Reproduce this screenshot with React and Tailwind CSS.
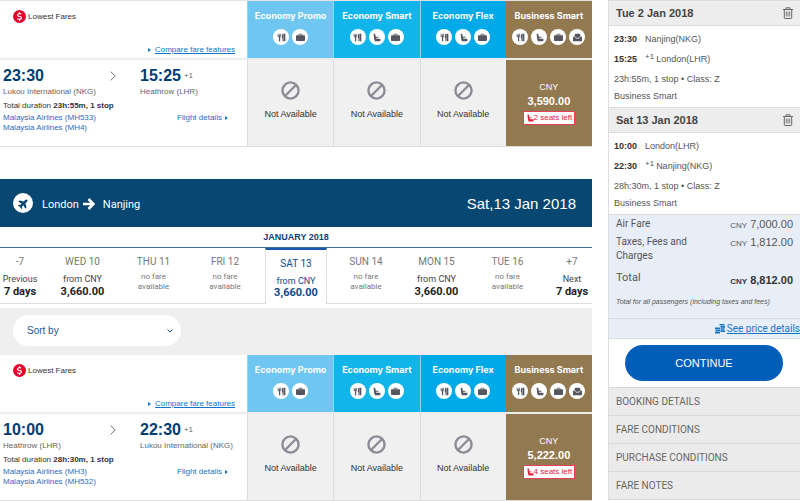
import { FaDollarSign, FaPlane } from 'react-icons/fa6';

const fares = [
  { name: 'Economy Promo', head: 'bg-[#6ec6f1]', perks: ['meal', 'bag'] },
  { name: 'Economy Smart', head: 'bg-[#12b5ea]', perks: ['meal', 'seat', 'bag'] },
  { name: 'Economy Flex', head: 'bg-[#00a9e7]', perks: ['meal', 'seat', 'bag'] },
  { name: 'Business Smart', head: 'bg-[#937950]', perks: ['meal', 'seat', 'bag', 'lounge'] },
];

const outbound = {
  depart: '23:30',
  from: 'Lukou International (NKG)',
  arrive: '15:25',
  to: 'Heathrow (LHR)',
  duration: '23h:55m, 1 stop',
  airlines: ['Malaysia Airlines (MH533)', 'Malaysia Airlines (MH4)'],
  price: '3,590.00',
  seats: '2 seats left',
};

const inbound = {
  depart: '10:00',
  from: 'Heathrow (LHR)',
  arrive: '22:30',
  to: 'Lukou International (NKG)',
  duration: '28h:30m, 1 stop',
  airlines: ['Malaysia Airlines (MH3)', 'Malaysia Airlines (MH532)'],
  price: '5,222.00',
  seats: '4 seats left',
};

const days = [
  { label: '-7', line: 'Previous', value: '7 days', pad: 'pr-[7px]' },
  { label: 'WED 10', line: 'from CNY', value: '3,660.00' },
  { label: 'THU 11' },
  { label: 'FRI 12', pad: 'pr-1' },
  { label: 'SAT 13', line: 'from CNY', value: '3,660.00', active: true },
  { label: 'SUN 14', pad: 'pl-1' },
  { label: 'MON 15', line: 'from CNY', value: '3,660.00' },
  { label: 'TUE 16' },
  { label: '+7', line: 'Next', value: '7 days', pad: 'pl-[9px]' },
];

const trips = [
  { date: 'Tue 2 Jan 2018', depart: '23:30', from: 'Nanjing(NKG)', arrive: '15:25', to: 'London(LHR)', info: '23h:55m, 1 stop • Class: Z' },
  { date: 'Sat 13 Jan 2018', depart: '10:00', from: 'London(LHR)', arrive: '22:30', to: 'Nanjing(NKG)', info: '28h:30m, 1 stop • Class: Z' },
];

const sections = ['BOOKING DETAILS', 'FARE CONDITIONS', 'PURCHASE CONDITIONS', 'FARE NOTES'];

const SEAT_PATH = 'M2.500 1h2.300l1.200 5h4v1.500H6.400L6.700 9H13v4H4.500L3.300 9z';

function PerkIcon({ type }) {
  return (
    <span className="flex size-4 items-center justify-center rounded-full bg-white text-[#55565f]">
      <svg viewBox="0 0 14 14" className="size-[9px]" fill="currentColor" aria-hidden="true">
        {type === 'meal' && (
          <path d="M1 1h1v3h1V1h1v3h1V1h1v4L5 6.500V13H3V6.500L1 5zM7.500 3.500C7.500 2 8.500 1 10 1v12H8.500V8h-1zM10.500 1H13v12h-2.500z" />
        )}
        {type === 'seat' && <path d={SEAT_PATH} />}
        {type === 'bag' && (
          <path d="M4 3.500V2.200C4 1.500 4.500 1 5.200 1h3.600c.7 0 1.200.5 1.200 1.200v1.300h2.500c.8 0 1.500.7 1.500 1.500v6c0 .8-.7 1.500-1.500 1.500h-11C.7 12.500 0 11.800 0 11V5c0-.8.7-1.500 1.500-1.500zM5.200 3.500h3.600V2.200H5.200z" />
        )}
        {type === 'lounge' && (
          <path d="M2.500 5V3.500C2.500 2 3.500 1 5 1h4c1.500 0 2.500 1 2.500 2.500V5L9 7.500H5zM0 7c0-1 .7-1.600 1.500-1.600.6 0 1 .3 1.400.8L5 8.500h4l2.100-2.300c.4-.5.8-.8 1.400-.8C13.300 5.400 14 6 14 7v5c0 .6-.4 1-1 1H1c-.6 0-1-.4-1-1z" />
        )}
      </svg>
    </span>
  );
}

function TrashIcon() {
  return (
    <svg viewBox="0 0 10 12" className="h-3 w-[10px]" fill="none" stroke="#666" aria-hidden="true">
      <path d="M0 2.500h10M3 2.500V.8h4v1.700M1.300 2.500v8.200c0 .5.3.8.8.8h5.800c.5 0 .8-.3.8-.8V2.500" />
      <path d="M3.300 4.500v5M5 4.500v5M6.700 4.500v5" strokeWidth=".8" />
    </svg>
  );
}

function FareTable({ flight }) {
  return (
    <table className="w-full table-fixed border-separate border-spacing-0 border-b border-[#ddd] bg-white">
      <thead>
        <tr>
          <th className="w-[247px] p-0 font-normal">
            <div className="flex h-[57px] flex-col justify-between pt-[9px] pr-3 pb-0.5 pl-[13px]">
              <p className="flex items-center gap-0.5 text-[8px] text-[#333]">
                <span className="flex size-[13px] items-center justify-center rounded-full bg-[#e4002b]">
                  <FaDollarSign className="size-[9px] text-white" />
                </span>
                Lowest Fares
              </p>
              <a href="#compare" className="flex items-center justify-end gap-1 text-[8px] leading-3 text-[#1573c6]">
                <svg viewBox="0 0 3 4" className="h-1 w-[3px]" fill="currentColor" aria-hidden="true"><path d="M0 0l3 2-3 2z" /></svg>
                <span className="underline">Compare fare features</span>
              </a>
            </div>
          </th>
          {fares.map(f => (
            <th key={f.name} className={`border-l border-[#8fd4f4] p-0 align-top last:border-l-0 ${f.head}`}>
              <div className="flex flex-col items-center gap-[7px] pt-2">
                <span className="font-[Inter,sans-serif] text-[9px] leading-[13px] font-bold whitespace-nowrap text-white">{f.name}</span>
                <div className="flex gap-[3px]">
                  {f.perks.map(p => <PerkIcon key={p} type={p} />)}
                </div>
              </div>
            </th>
          ))}
        </tr>
      </thead>
      <tbody>
        <tr>
          <td className="border-t-2 border-[#ececec] p-0 align-top">
            <div className="flex h-[86px] pt-[6px] pl-[3px] text-[8px] leading-3 text-[#666]">
              <div className="w-[137px] whitespace-nowrap">
                <div className="flex items-center">
                  <span className="w-[107px] text-[16px] leading-5 font-bold text-[#003d75]">{flight.depart}</span>
                  <svg viewBox="0 0 6 10" className="h-[10px] w-[6px]" fill="none" stroke="#777" aria-hidden="true"><path d="M.6.6L5.200 5 .6 9.400" /></svg>
                </div>
                <p>{flight.from}</p>
                <p className="leading-[15px] text-[#333]">Total duration <b>{flight.duration}</b></p>
                {flight.airlines.map(a => (
                  <a key={a} href="#airline" className="block leading-[10px] text-[#2d6cc0]">{a}</a>
                ))}
              </div>
              <div className="whitespace-nowrap">
                <div className="flex items-center gap-[3px]">
                  <span className="text-[16px] leading-5 font-bold text-[#003d75]">{flight.arrive}</span>
                  <span>+1</span>
                </div>
                <p>{flight.to}</p>
                <a href="#details" className="mt-[14px] ml-[37px] flex items-center gap-[3px] text-[#1573c6]">
                  Flight details
                  <svg viewBox="0 0 3 4" className="h-1 w-[3px]" fill="currentColor" aria-hidden="true"><path d="M0 0l3 2-3 2z" /></svg>
                </a>
              </div>
            </div>
          </td>
          {fares.slice(0, 3).map(f => (
            <td key={f.name} className="border-t-2 border-l border-[#dcdcdc] border-t-[#ececec] bg-[#f0f0f0] p-0 align-top">
              <div className="flex flex-col items-center gap-2 pt-[21px] text-[9px] leading-3 text-[#333]">
                <svg viewBox="0 0 20 20" className="size-[19px]" fill="none" stroke="#8c8c96" strokeWidth="2.500" aria-hidden="true">
                  <circle cx="10" cy="10" r="8.500" />
                  <path d="M4.500 15.500l11-11" />
                </svg>
                Not Available
              </div>
            </td>
          ))}
          <td className="border-t-2 border-t-[#ececec] bg-[#937950] p-0 align-top">
            <div className="flex flex-col items-center pt-5 text-[9px] leading-[14px] text-white">
              CNY
              <b className="text-[11px]">{flight.price}</b>
              <span className="mt-[3px] flex items-center border border-[#e4405a] bg-white px-0.5 text-[8px] leading-3 whitespace-nowrap text-[#e0203c]">
                <svg viewBox="0 0 14 14" className="size-2" fill="currentColor" aria-hidden="true"><path d={SEAT_PATH} /></svg>
                {flight.seats}
              </span>
            </div>
          </td>
        </tr>
      </tbody>
    </table>
  );
}

function DayCell({ day }) {
  if (day.active) {
    return (
      <button type="button" aria-pressed="true" className="flex h-14 flex-col items-center border-x border-t-2 border-x-[#ddd] border-t-[#1c57b0] pt-2 text-[#0b4a8a]">
        <span className="text-[10px] leading-3">{day.label}</span>
        <span className="mt-[5px] text-[9px] leading-3">{day.line}</span>
        <b className="text-[11px] leading-3">{day.value}</b>
      </button>
    );
  }
  return (
    <button type="button" className={`flex h-14 flex-col items-center border-b border-[#ddd] pt-2 text-[#777] ${day.pad || ''}`}>
      <span className="text-[10px] leading-3">{day.label}</span>
      {day.value ? (
        <>
          <span className="mt-[5px] text-[9px] leading-3 text-[#444]">{day.line}</span>
          <b className="text-[11px] leading-[13px] whitespace-nowrap text-[#222]">{day.value}</b>
        </>
      ) : (
        <span className="mt-1 text-[8px] leading-[10px]">no fare<br />available</span>
      )}
    </button>
  );
}

function Summary() {
  return (
    <aside className="w-[192px] shrink-0 border-l border-[#ddd] text-[9px] text-[#555]">
      {trips.map(t => (
        <section key={t.date}>
          <div className="flex h-[26px] items-center justify-between border-y border-[#ddd] bg-[#ededed] px-[7px]">
            <h2 className="text-[11px] font-bold text-[#444]">{t.date}</h2>
            <button type="button" aria-label={`Remove ${t.date}`}><TrashIcon /></button>
          </div>
          <div className="py-[3px] pl-[5px] leading-5">
            <p className="flex"><b className="w-[31px] text-[#333]">{t.depart}</b>{t.from}</p>
            <p className="flex"><b className="w-[31px] text-[#333]">{t.arrive}</b><span className="mr-0.5 text-[8px] leading-4">+1</span>{t.to}</p>
            <p>{t.info}</p>
            <p className="leading-[15px]">Business Smart</p>
          </div>
        </section>
      ))}
      <div className="border-y border-[#ddd] bg-[#e8eef7]">
        <dl className="grid grid-cols-[1fr_auto] px-[7px] font-[Roboto,sans-serif] text-[10px]">
          <dt className="leading-[18px]">Air Fare</dt>
          <dd className="font-['Liberation_Sans',Arial,sans-serif] text-[11px] leading-[18px]"><span className="text-[8px]">CNY</span> 7,000.00</dd>
          <dt className="w-[80px] leading-[14px]">Taxes, Fees and Charges</dt>
          <dd className="font-['Liberation_Sans',Arial,sans-serif] text-[11px] leading-[14px]"><span className="text-[8px]">CNY</span> 1,812.00</dd>
          <dt className="mt-[6px] text-[11px] leading-[17px]">Total</dt>
          <dd className="mt-[7px] font-['Liberation_Sans',Arial,sans-serif] text-[11px] leading-5 font-bold text-[#333]"><span className="text-[8px]">CNY</span> 8,812.00</dd>
        </dl>
        <p className="mt-1 mb-[10px] pl-[7px] text-[7px] leading-3 italic">Total for all passengers (including taxes and fees)</p>
        <a href="#price" className="flex h-5 items-center justify-end gap-0.5 border-t border-[#d5dae3] font-[Roboto,sans-serif] text-[10px] text-[#1573c6]">
          <svg viewBox="0 0 10 10" className="size-[10px]" fill="currentColor" aria-hidden="true">
            <path d="M4.500 0h5v1.600h-5zM5.500 2.100h4.500v1.600H5.500zM5.500 4.200h4v1.600h-4zM5.500 6.300H10v1.600H5.500zM0 3.600h5v1.600H0zM.4 5.700H5v1.600H.4zM0 7.800h5v1.700H0z" />
          </svg>
          <span className="underline">See price details</span>
        </a>
      </div>
      <div className="pt-[6px] pr-[17px] pb-[6px] pl-4">
        <button type="button" className="h-9 w-full rounded-full bg-[#005eb8] text-[11px] text-white">CONTINUE</button>
      </div>
      <ul className="border-t border-[#d8d8d8]">
        {sections.map(s => (
          <li key={s} className="border-b border-[#d8d8d8] bg-[#ebebeb]">
            <button type="button" className="h-[27px] w-full pl-[7px] text-left font-[Roboto,sans-serif] text-[10px] text-[#666]">{s}</button>
          </li>
        ))}
      </ul>
    </aside>
  );
}

export default function App() {
  return (
    <div className="flex items-start gap-4 bg-white font-['Liberation_Sans',Arial,sans-serif]">
      <main className="min-w-0 flex-1 border-t border-[#e4e4e4]">
        <FareTable flight={outbound} />

        <header className="mt-8 flex h-12 items-center justify-between bg-[#084771] pr-4 pl-[13px] text-white">
          <h1 className="flex items-center pt-1 font-[Roboto,sans-serif] text-[11px]">
            <span className="mr-[9px] mb-1 flex size-5 items-center justify-center rounded-full bg-white">
              <FaPlane className="size-[11px] -rotate-45 text-[#084771]" />
            </span>
            London
            <svg viewBox="0 0 12 12" className="mr-2 mb-0.5 ml-1 size-3" fill="none" stroke="currentColor" strokeWidth="2.500" aria-hidden="true">
              <path d="M0 6h10M5.500 1L10.500 6l-5 5" />
            </svg>
            Nanjing
          </h1>
          <p className="pt-0.5 text-[15px]">Sat,13 Jan 2018</p>
        </header>

        <h2 className="h-5 text-center text-[9px] leading-[21px] font-bold text-[#0b3f75]">JANUARY 2018</h2>
        <div className="grid grid-cols-[47fr_71fr_71fr_76fr_62fr_74fr_71fr_71fr_49fr] border-t border-[#3f6fa0] font-[Roboto,sans-serif]">
          {days.map(d => <DayCell key={d.label} day={d} />)}
        </div>

        <div className="mt-1 bg-[#efefef] pt-[7px] pb-[9px] pl-[13px]">
          <label className="flex w-[168px] items-center rounded-full bg-white pr-2 text-[#1c5a94]">
            <select aria-label="Sort by" className="h-[31px] flex-1 appearance-none rounded-full bg-transparent pl-[14px] text-[10px] outline-none">
              <option>Sort by</option>
            </select>
            <svg viewBox="0 0 6 4" className="h-1 w-[6px]" fill="none" stroke="currentColor" aria-hidden="true"><path d="M.5.5L3 3 5.500.5" /></svg>
          </label>
        </div>

        <FareTable flight={inbound} />
      </main>
      <Summary />
    </div>
  );
}
